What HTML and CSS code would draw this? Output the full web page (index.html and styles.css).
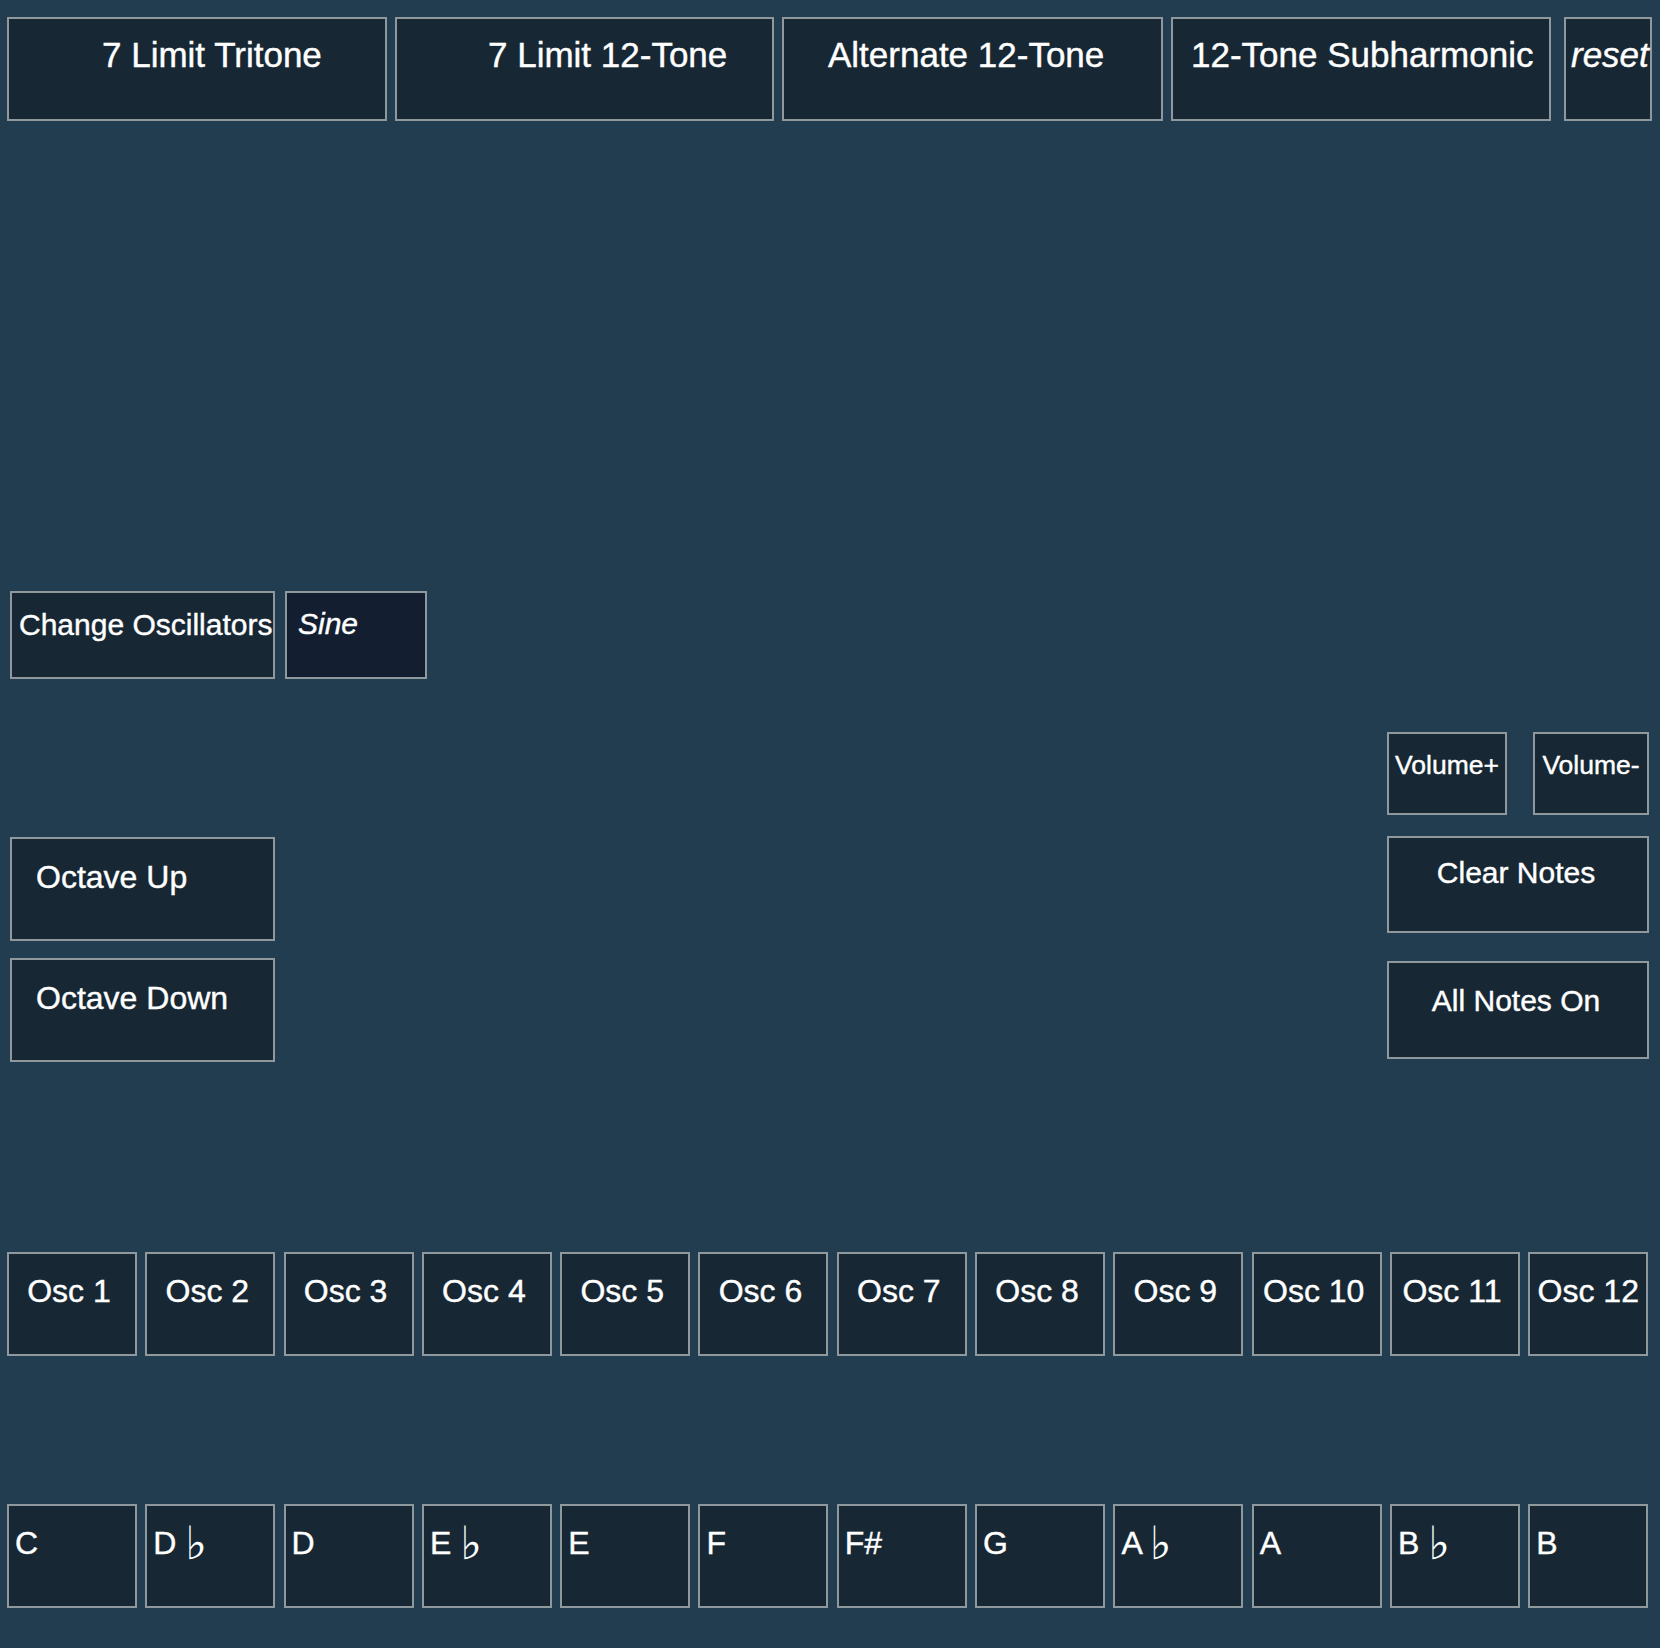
FILE: index.html
```html
<!DOCTYPE html>
<html lang="en">
<head>
<meta charset="utf-8">
<title>Tuning Synth</title>
<link rel="stylesheet" href="styles.css">
</head>
<body>
<div class="page">
  <div class="presets">
    <button class="btn preset preset-1"><span class="label">7 Limit Tritone</span></button>
    <button class="btn preset preset-2"><span class="label">7 Limit 12-Tone</span></button>
    <button class="btn preset preset-3"><span class="label">Alternate 12-Tone</span></button>
    <button class="btn preset preset-4"><span class="label">12-Tone Subharmonic</span></button>
    <button class="btn preset reset"><span class="label">reset</span></button>
  </div>

  <div class="osc-type">
    <button class="btn change-osc"><span class="label">Change Oscillators</span></button>
    <div class="btn wave"><span class="label">Sine</span></div>
  </div>

  <div class="controls">
    <div class="octave-col">
      <button class="btn octave"><span class="label">Octave Up</span></button>
      <button class="btn octave"><span class="label">Octave Down</span></button>
    </div>
    <div class="right-col">
      <div class="volume-row">
        <button class="btn volume vol-up"><span class="label">Volume+</span></button>
        <button class="btn volume vol-down"><span class="label">Volume-</span></button>
      </div>
      <button class="btn notes-btn clear"><span class="label">Clear Notes</span></button>
      <button class="btn notes-btn all-on"><span class="label">All Notes On</span></button>
    </div>
  </div>

  <div class="key-row osc-row">
    <button class="btn osc"><span class="label">Osc 1</span></button>
    <button class="btn osc"><span class="label">Osc 2</span></button>
    <button class="btn osc"><span class="label">Osc 3</span></button>
    <button class="btn osc"><span class="label">Osc 4</span></button>
    <button class="btn osc"><span class="label">Osc 5</span></button>
    <button class="btn osc"><span class="label">Osc 6</span></button>
    <button class="btn osc"><span class="label">Osc 7</span></button>
    <button class="btn osc"><span class="label">Osc 8</span></button>
    <button class="btn osc"><span class="label">Osc 9</span></button>
    <button class="btn osc"><span class="label">Osc 10</span></button>
    <button class="btn osc"><span class="label">Osc 11</span></button>
    <button class="btn osc last"><span class="label">Osc 12</span></button>
  </div>

  <div class="key-row note-row">
    <button class="btn note"><span class="label">C</span></button>
    <button class="btn note"><span class="label">D <span class="flat">♭</span></span></button>
    <button class="btn note"><span class="label">D</span></button>
    <button class="btn note"><span class="label">E <span class="flat">♭</span></span></button>
    <button class="btn note"><span class="label">E</span></button>
    <button class="btn note"><span class="label">F</span></button>
    <button class="btn note"><span class="label">F#</span></button>
    <button class="btn note"><span class="label">G</span></button>
    <button class="btn note"><span class="label">A <span class="flat">♭</span></span></button>
    <button class="btn note"><span class="label">A</span></button>
    <button class="btn note"><span class="label">B <span class="flat">♭</span></span></button>
    <button class="btn note last"><span class="label">B</span></button>
  </div>
</div>
</body>
</html>
```

FILE: styles.css
```css
* {
  box-sizing: border-box;
}

html, body {
  margin: 0;
  padding: 0;
}

body {
  background: #223d50;
  font-family: "Liberation Sans", Arial, Helvetica, sans-serif;
  color: #ffffff;
  width: 1660px;
  height: 1648px;
  overflow: hidden;
}

.page {
  display: flex;
  flex-direction: column;
}

.btn {
  display: flex;
  align-items: flex-start;
  justify-content: flex-start;
  margin: 0;
  background: #172834;
  border: 2px solid #8f999d;
  border-radius: 0;
  color: #ffffff;
  font-family: inherit;
  line-height: 1;
  white-space: nowrap;
  overflow: visible;
  flex: none;
}

.label {
  display: block;
  white-space: nowrap;
  -webkit-text-stroke: 0.4px #ffffff;
}

/* top preset row */
.presets {
  display: flex;
  gap: 8px;
  padding: 17px 0 0 7px;
}

.preset {
  height: 104px;
  font-size: 35px;
  padding-top: 18px;
}

.preset-1 { width: 380px; padding-left: 93px; }
.preset-2 { width: 379px; padding-left: 91px; }
.preset-3 { width: 381px; padding-left: 44px; }
.preset-4 { width: 380px; padding-left: 18px; }

.reset {
  width: 88px;
  margin-left: 5px;
  padding-left: 5px;
  padding-right: 0;
  font-style: italic;
}

/* oscillator type */
.osc-type {
  display: flex;
  gap: 10px;
  margin-top: 470px;
  padding-left: 10px;
}

.change-osc {
  width: 265px;
  height: 88px;
  font-size: 30px;
  padding: 17px 0 0 7px;
}

.wave {
  width: 142px;
  height: 88px;
  font-size: 30px;
  font-style: italic;
  padding: 16px 0 0 11px;
  background: #131f30;
}

/* middle controls */
.controls {
  display: flex;
  justify-content: space-between;
  align-items: flex-start;
  margin-top: 53px;
  padding: 0 11px 0 10px;
}

.octave-col {
  display: flex;
  flex-direction: column;
  gap: 17px;
  margin-top: 105px;
}

.octave {
  width: 265px;
  height: 104px;
  font-size: 32px;
  padding: 22px 0 0 24px;
}

.right-col {
  display: flex;
  flex-direction: column;
  width: 262px;
}

.volume-row {
  display: flex;
  justify-content: space-between;
}

.volume {
  height: 83px;
  font-size: 26.5px;
  padding: 18px 0 0 0;
  justify-content: center;
}

.vol-up { width: 120px; }
.vol-down { width: 116px; }

.notes-btn {
  width: 262px;
  font-size: 30px;
  justify-content: center;
  padding-left: 0;
  padding-right: 4px;
}

.clear {
  height: 97px;
  margin-top: 21px;
  padding-top: 20px;
}

.all-on {
  height: 98px;
  margin-top: 28px;
  padding-top: 23px;
}

/* key rows */
.key-row {
  display: flex;
  gap: 8.3px;
  padding-left: 7px;
}

.osc-row {
  margin-top: 190px;
}

.note-row {
  margin-top: 148px;
}

.osc,
.note {
  width: 130px;
  height: 104px;
  font-size: 32px;
  padding-top: 21px;
}

.osc {
  justify-content: center;
  padding-left: 0;
  padding-right: 6px;
}

.osc.last {
  width: 120px;
  padding-right: 0;
}

.note {
  padding-left: 6px;
  padding-right: 0;
}

.note.last {
  width: 120px;
}

.flat {
  font-family: "DejaVu Sans", sans-serif;
  font-size: 46px;
  line-height: 0;
  vertical-align: -5px;
  -webkit-text-stroke: 0;
}
```
